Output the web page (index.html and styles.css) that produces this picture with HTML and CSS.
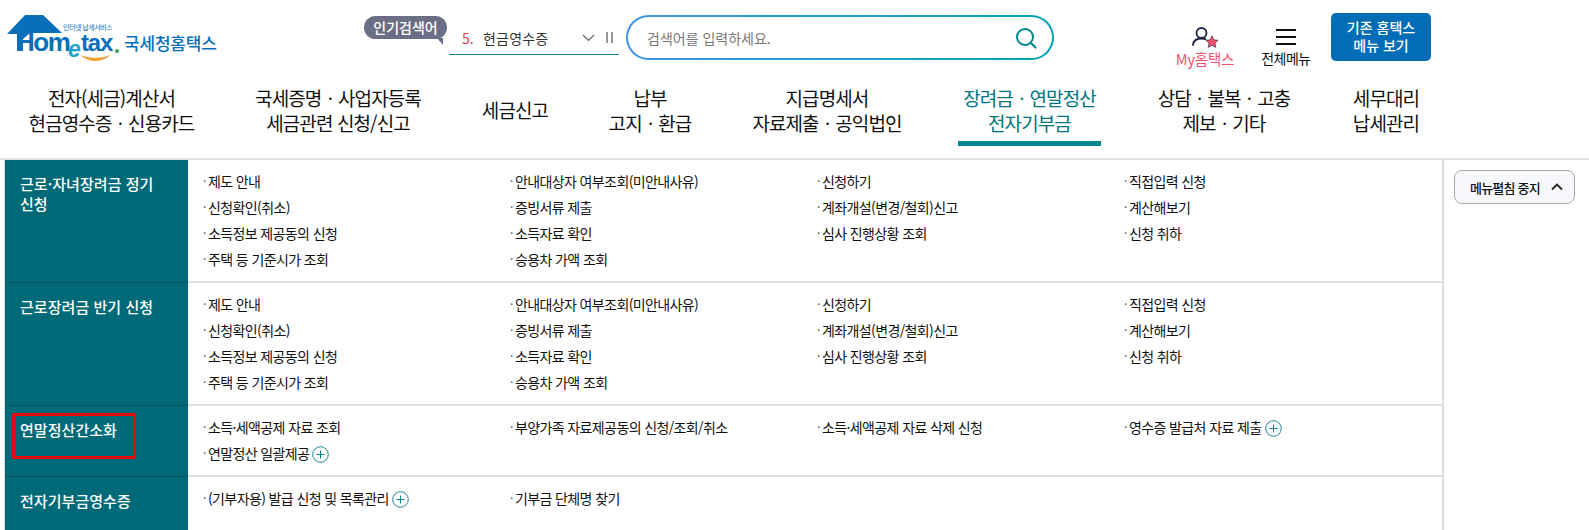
FILE: index.html
```html
<!DOCTYPE html>
<html lang="ko">
<head>
<meta charset="utf-8">
<title>Hometax</title>
<link rel="stylesheet" href="styles.css">
</head>
<body>
<header class="top">
  <a class="logo">
    <svg class="logo-mark" width="122" height="60" viewBox="0 0 122 60">
      <path d="M7 29 L25 10 H43 L62 28 H30 L23 34 V46 H17 V29 Z" fill="#0a6fb9"/>
      <text x="16" y="46" class="logo-h">Hom</text>
      <text x="68" y="52" class="logo-e">e</text>
      <text x="81" y="46" class="logo-t">tax</text>
      <circle cx="117" cy="46" r="2" fill="#3aa35a"/>
      <path d="M80 50 Q95 62 111 50 Q95 56 80 50Z" fill="#f0a030"/>
    </svg>
    <span class="logo-tag">인터넷 납세서비스</span>
    <span class="logo-name">국세청홈택스</span>
  </a>
  <div class="popular">
    <span class="popular-tag">인기검색어</span>
    <div class="rank">
      <span class="rank-num">5.</span><span class="rank-word">현금영수증</span>
      <svg class="rank-chev" width="13" height="8" viewBox="0 0 13 8"><path d="M1 1l5.500 5.500L12 1" fill="none" stroke="#666" stroke-width="1.200"/></svg>
      <span class="rank-pause"><i></i><i></i></span>
    </div>
  </div>
  <div class="search">
    <span class="search-text">검색어를 입력하세요.</span>
    <svg width="22" height="22" viewBox="0 0 22 22"><circle cx="10" cy="10" r="8" fill="none" stroke="#00868f" stroke-width="2"/><path d="M16 16l4.500 4.500" stroke="#00868f" stroke-width="2.200" stroke-linecap="round"/></svg>
  </div>
  <div class="util">
    <a class="util-item util-my">
      <svg width="28" height="24" viewBox="0 0 28 24"><circle cx="10.500" cy="7" r="5" fill="none" stroke="#1c2340" stroke-width="1.800"/><path d="M2 19c.5-4.500 4-6.500 8.500-6.500 1.500 0 3 .3 4 .8" fill="none" stroke="#1c2340" stroke-width="1.800" stroke-linecap="round"/><path d="M21 9.800L22.900 13.800L27 14.300L24 17.200L24.800 21.400L21 19.300L17.200 21.400L18 17.200L15 14.300L19.100 13.800Z" fill="#f4506f" stroke="#1c2340" stroke-width=".6"/></svg>
      <span>My홈택스</span>
    </a>
    <a class="util-item util-all">
      <span class="burger"><i></i><i></i><i></i></span>
      <span>전체메뉴</span>
    </a>
    <a class="old-btn">기존 홈택스<br>메뉴 보기</a>
  </div>
</header>
<nav class="gnb">
  <a class="g1">전자(세금)계산서<br>현금영수증ㆍ신용카드</a>
  <a class="g2">국세증명ㆍ사업자등록<br>세금관련 신청/신고</a>
  <a class="g3">세금신고</a>
  <a class="g4">납부<br>고지ㆍ환급</a>
  <a class="g5">지급명세서<br>자료제출ㆍ공익법인</a>
  <a class="g6 on">장려금ㆍ연말정산<br>전자기부금</a>
  <a class="g7">상담ㆍ불복ㆍ고충<br>제보ㆍ기타</a>
  <a class="g8">세무대리<br>납세관리</a>
</nav>
<main class="panel">
  <div class="table">
    <section class="row r1">
      <h3 class="head">근로·자녀장려금 정기 신청</h3>
      <ul class="links">
        <li>제도 안내</li><li>안내대상자 여부조회(미안내사유)</li><li>신청하기</li><li>직접입력 신청</li>
        <li>신청확인(취소)</li><li>증빙서류 제출</li><li>계좌개설(변경/철회)신고</li><li>계산해보기</li>
        <li>소득정보 제공동의 신청</li><li>소득자료 확인</li><li>심사 진행상황 조회</li><li>신청 취하</li>
        <li>주택 등 기준시가 조회</li><li>승용차 가액 조회</li>
      </ul>
    </section>
    <section class="row r1">
      <h3 class="head">근로장려금 반기 신청</h3>
      <ul class="links">
        <li>제도 안내</li><li>안내대상자 여부조회(미안내사유)</li><li>신청하기</li><li>직접입력 신청</li>
        <li>신청확인(취소)</li><li>증빙서류 제출</li><li>계좌개설(변경/철회)신고</li><li>계산해보기</li>
        <li>소득정보 제공동의 신청</li><li>소득자료 확인</li><li>심사 진행상황 조회</li><li>신청 취하</li>
        <li>주택 등 기준시가 조회</li><li>승용차 가액 조회</li>
      </ul>
    </section>
    <section class="row r3">
      <h3 class="head"><span class="mark">연말정산간소화</span></h3>
      <ul class="links">
        <li>소득·세액공제 자료 조회</li><li>부양가족 자료제공동의 신청/조회/취소</li><li>소득·세액공제 자료 삭제 신청</li><li>영수증 발급처 자료 제출<svg class="plus" viewBox="0 0 17 17"><circle cx="8.500" cy="8.500" r="7.800" fill="none" stroke="#1f8496"/><path d="M4.500 8.500h8M8.500 4.500v8" stroke="#00868f"/></svg></li>
        <li>연말정산 일괄제공<svg class="plus" viewBox="0 0 17 17"><circle cx="8.500" cy="8.500" r="7.800" fill="none" stroke="#1f8496"/><path d="M4.500 8.500h8M8.500 4.500v8" stroke="#00868f"/></svg></li>
      </ul>
    </section>
    <section class="row r4">
      <h3 class="head">전자기부금영수증</h3>
      <ul class="links">
        <li>(기부자용) 발급 신청 및 목록관리<svg class="plus" viewBox="0 0 17 17"><circle cx="8.500" cy="8.500" r="7.800" fill="none" stroke="#1f8496"/><path d="M4.500 8.500h8M8.500 4.500v8" stroke="#00868f"/></svg></li><li>기부금 단체명 찾기</li>
      </ul>
    </section>
  </div>
  <aside class="side">
    <button class="fold">메뉴펼침 중지<svg width="12" height="8" viewBox="0 0 12 8"><path d="M1 6.500l5-5 5 5" fill="none" stroke="#222" stroke-width="1.800"/></svg></button>
  </aside>
</main>
</body>
</html>
```
FILE: styles.css
```css
* { box-sizing: border-box; }
html, body { margin: 0; padding: 0; }
body {
  width: 1589px;
  height: 530px;
  overflow: hidden;
  background: #fff;
  color: #111;
  font-family: "Noto Sans CJK KR", "Noto Sans", sans-serif;
}
h3, ul { margin: 0; padding: 0; }
ul { list-style: none; }

.top { display: flex; height: 76px; position: relative; }

.logo { position: relative; display: block; width: 362px; height: 76px; padding-top: 5px; flex: none; }
.logo-mark { display: block; }
.logo-h { font: 700 26px "Liberation Sans", sans-serif; fill: #0a6fb9; letter-spacing: -1.500px; }
.logo-t { font: 700 24px "Liberation Sans", sans-serif; fill: #0a6fb9; letter-spacing: -1.200px; }
.logo-e { font: italic 700 23px "Liberation Sans", sans-serif; fill: #1fa3c7; }
.logo-tag { position: absolute; left: 63px; top: 22px; font-size: 7px; line-height: 10px; color: #0a6fb9; white-space: nowrap; letter-spacing: -.5px; }
.logo-name { position: absolute; left: 124px; top: 31px; font-size: 17px; line-height: 24px; font-weight: 500; color: #0a6fb9; letter-spacing: -.2px; white-space: nowrap; }

.popular { position: relative; width: 254px; flex: none; }
.popular-tag {
  position: absolute; left: 2px; top: 16px; width: 83px; height: 23px;
  border-radius: 12px;
  background: #6b6f86; color: #fff;
  font-size: 14px; line-height: 22px; text-align: center; font-weight: 500;
}
.popular-tag::after {
  content: ""; position: absolute; right: 4px; bottom: -6px;
  border-top: 7px solid #6b6f86; border-left: 6px solid transparent;
}
.rank {
  position: absolute; left: 87px; top: 21px; width: 170px; height: 34px;
  display: flex; align-items: center;
  border-bottom: 1px solid #0f7f8f;
  padding: 0 0 0 13px;
  font-size: 14px;
}
.rank-num { color: #e8404f; width: 21px; }
.rank-word { width: 99px; color: #333; letter-spacing: .2px; }
.rank-chev { margin-right: 11px; }
.rank-pause { display: flex; gap: 3px; }
.rank-pause i { width: 2px; height: 11px; background: #999; }

.search {
  flex: none; width: 428px; height: 45px; margin-top: 15px; margin-left: 10px;
  display: flex; align-items: center; justify-content: space-between;
  padding: 0 15px 0 19px;
  border: 2px solid transparent; border-radius: 23px;
  background: linear-gradient(#fff, #fff) padding-box, linear-gradient(90deg, #3f94e6, #06a6b4) border-box;
}
.search-text { font-size: 14px; color: #777; }

.util { flex: none; display: flex; }
.util-item { display: flex; flex-direction: column; align-items: center; line-height: 18px; white-space: nowrap; }
.util-my { width: 62px; margin-left: 120px; padding-top: 26px; color: #f4506f; font-size: 14.500px; letter-spacing: -.2px; }
.util-all { width: 52px; margin-left: 24px; padding-top: 29px; gap: 4px; font-size: 14px; letter-spacing: -.5px; }
.burger { display: flex; flex-direction: column; gap: 5px; }
.burger i { display: block; width: 20px; height: 2px; background: #111; }
.old-btn {
  margin: 13px 0 0 19px; width: 100px; height: 48px;
  background: #006db6; border-radius: 5px; color: #fff;
  font-size: 14px; line-height: 18px; font-weight: 500; text-align: center;
  padding-top: 5px;
}

.gnb { position: relative; height: 84px; border-bottom: 2px solid #e0e0e0; display: flex; font-size: 19px; line-height: 25px; letter-spacing: -.9px; text-align: center; color: #111; }
.gnb a { display: flex; align-items: center; justify-content: center; padding-bottom: 15px; flex: none; position: relative; white-space: nowrap; }
.g1 { width: 223px; }
.g2 { width: 230px; }
.g3 { width: 124px; }
.g4 { width: 146px; }
.g5 { width: 208px; }
.g6 { width: 143px; margin-left: 27px; color: #00767e; }
.g6.on::after { content: ""; position: absolute; left: 0; right: 0; bottom: 12px; height: 5px; background: #00868f; }
.g7 { width: 246px; }
.g8 { width: 78px; }

.panel { display: flex; height: 370px; padding-left: 4px; }
.table { width: 1440px; flex: none; display: flex; flex-direction: column; border-left: 1px solid #ddd; border-right: 2px solid #ddd; }
.row { display: flex; border-bottom: 2px solid #e0e0e0; flex: none; }
.row:last-child { border-bottom: 0; flex: 1; }
.r1 { height: 123px; }
.r3 { height: 71px; }
.head {
  flex: none; width: 183px; background: #016a78;
  color: #fff; font-size: 15px; line-height: 20px; font-weight: 500;
  padding: 14px 30px 0 15px; letter-spacing: .05px;
  margin-bottom: -2px;
  border-bottom: 1px solid #01525e;
  position: relative;
}
.row:last-child .head { margin-bottom: 0; border-bottom: 0; }
.mark { display: block; }
.mark::before { content: ""; position: absolute; left: 7px; top: 7px; width: 118px; height: 40px; border: 3px solid #ea0a0e; }
.links { flex: 1; display: grid; grid-template-columns: 307px 307px 307px 1fr; grid-auto-rows: 26px; padding: 8px 0 0 15px; font-size: 14px; line-height: 26px; letter-spacing: -.62px; align-content: start; }
.links li { white-space: nowrap; display: flex; align-items: center; }
.links li::before { content: "·"; width: 5px; flex: none; font-size: 12px; color: #555; }
.plus { width: 17px; height: 17px; margin-left: 3px; margin-top: 2px; }

.side { flex: 1; padding: 10px 0 0 10px; }
.fold {
  display: flex; align-items: center; justify-content: space-between;
  width: 121px; height: 34px; padding: 0 11px 0 15px;
  border: 1px solid #a8a8a8; border-radius: 8px; background: #f7f8fb;
  font: 500 13px "Noto Sans CJK KR", sans-serif; letter-spacing: -.8px; color: #111; white-space: nowrap;
}
```
